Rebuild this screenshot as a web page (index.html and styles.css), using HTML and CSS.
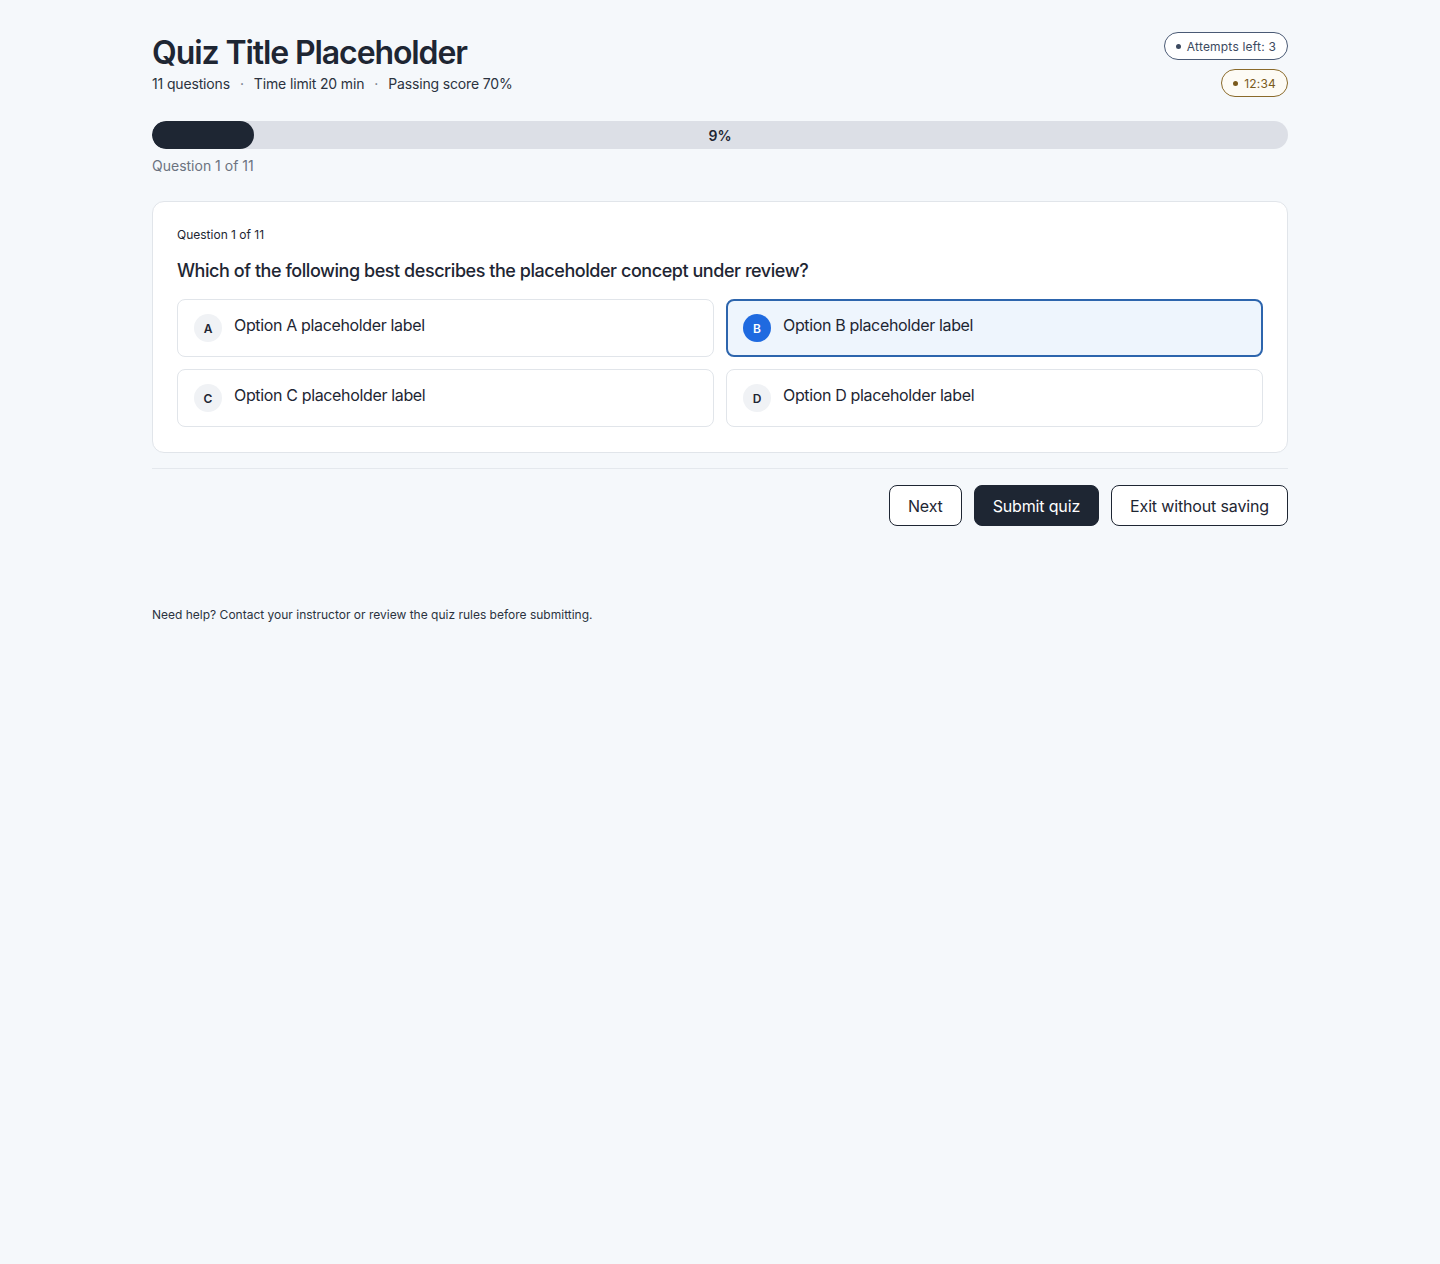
FILE: index.html
```html
<!DOCTYPE html>
<html lang="en">
<head>
    <meta charset="UTF-8">
    <meta name="viewport" content="width=device-width, initial-scale=1.0">
    <title>Quiz Title Placeholder</title>
    <link rel="stylesheet" href="styles.css">
</head>
<body>

    <main class="quiz-page">

        <!-- Header: title, meta and status pills -->
        <header class="quiz-header">
            <div class="quiz-heading">
                <h1 class="quiz-title">Quiz Title Placeholder</h1>
                <p class="quiz-meta">
                    <span>11 questions</span>
                    <span class="sep">·</span>
                    <span>Time limit 20 min</span>
                    <span class="sep">·</span>
                    <span>Passing score 70%</span>
                </p>
            </div>
            <div class="quiz-status">
                <span class="pill pill-attempts"><span class="dot"></span>Attempts left: 3</span>
                <span class="pill pill-timer"><span class="dot"></span>12:34</span>
            </div>
        </header>

        <!-- Progress -->
        <div class="progress">
            <div class="progress-fill" style="width: 9%"></div>
            <span class="progress-label">9%</span>
        </div>
        <p class="progress-caption">Question 1 of 11</p>

        <!-- Question card -->
        <section class="question-card">
            <p class="question-count">Question 1 of 11</p>
            <h2 class="question-text">Which of the following best describes the placeholder concept under review?</h2>

            <div class="options">
                <button class="option">
                    <span class="option-key">A</span>
                    <span class="option-label">Option A placeholder label</span>
                </button>
                <button class="option selected">
                    <span class="option-key">B</span>
                    <span class="option-label">Option B placeholder label</span>
                </button>
                <button class="option">
                    <span class="option-key">C</span>
                    <span class="option-label">Option C placeholder label</span>
                </button>
                <button class="option">
                    <span class="option-key">D</span>
                    <span class="option-label">Option D placeholder label</span>
                </button>
            </div>
        </section>

        <!-- Actions -->
        <div class="actions">
            <button class="btn btn-outline">Next</button>
            <button class="btn btn-primary">Submit quiz</button>
            <button class="btn btn-outline">Exit without saving</button>
        </div>

        <p class="help-text">Need help? Contact your instructor or review the quiz rules before submitting.</p>

    </main>

</body>
</html>
```

FILE: styles.css
```css
/* Reset */
* {
    box-sizing: border-box;
    margin: 0;
    padding: 0;
}

body {
    font-family: Inter, "Noto Sans", sans-serif;
    background-color: #f5f8fb;
    color: #1e2633;
}

/* Page wrapper */
.quiz-page {
    width: 1136px;
    margin: 0 auto;
    padding-top: 32px;
}

/* Header */
.quiz-header {
    display: flex;
    justify-content: space-between;
    align-items: flex-start;
}

.quiz-title {
    font-size: 32px;
    font-weight: 600;
    line-height: 42px;
    letter-spacing: -1.1px;
    color: #1e2633;
}

.quiz-meta {
    display: flex;
    gap: 10px;
    margin-top: 0;
    font-size: 14px;
    line-height: 20px;
    letter-spacing: -0.15px;
    color: #2b3340;
}

.quiz-meta .sep {
    color: #6b7380;
}

.quiz-status {
    display: flex;
    flex-direction: column;
    align-items: flex-end;
    gap: 9px;
}

.pill {
    display: inline-flex;
    align-items: center;
    gap: 6px;
    height: 28px;
    padding: 0 11px;
    border-radius: 14px;
    font-size: 12px;
    letter-spacing: 0.2px;
    background-color: #fff;
}

.pill .dot {
    width: 5px;
    height: 5px;
    border-radius: 50%;
}

.pill-attempts {
    border: 1px solid #4a5a75;
    color: #3c4a60;
}

.pill-attempts .dot {
    background-color: #3c4a60;
}

.pill-timer {
    border: 1px solid #8a6a2a;
    color: #7a5a1c;
    background-color: #fdfbf5;
}

.pill-timer .dot {
    background-color: #7a5a1c;
}

/* Progress bar */
.progress {
    position: relative;
    margin-top: 24px;
    height: 28px;
    border-radius: 14px;
    background-color: #dcdfe6;
    overflow: hidden;
}

.progress-fill {
    height: 100%;
    border-radius: 14px;
    background-color: #1e2633;
}

.progress-label {
    position: absolute;
    inset: 0;
    display: flex;
    align-items: center;
    justify-content: center;
    font-size: 14px;
    font-weight: 600;
    color: #1e2633;
}

.progress-caption {
    margin-top: 8px;
    font-size: 14px;
    line-height: 18px;
    color: #6b7380;
}

/* Question card */
.question-card {
    margin-top: 26px;
    padding: 24px 24px 25px;
    background-color: #fff;
    border: 1px solid #e1e5ea;
    border-radius: 12px;
}

.question-count {
    margin-top: 1px;
    font-size: 12px;
    line-height: 16px;
    color: #1e2633;
}

.question-text {
    margin-top: 17px;
    font-size: 18px;
    font-weight: 500;
    line-height: 22px;
    letter-spacing: -0.45px;
    color: #1e2633;
}

.options {
    display: grid;
    grid-template-columns: 1fr 1fr;
    gap: 12px;
    margin-top: 17px;
}

.option {
    display: flex;
    align-items: center;
    gap: 12px;
    height: 58px;
    padding: 0 16px;
    background-color: #fff;
    border: 1px solid #e1e5ea;
    border-radius: 8px;
    font-family: inherit;
    text-align: left;
    cursor: pointer;
}

.option-key {
    display: flex;
    align-items: center;
    justify-content: center;
    width: 28px;
    height: 28px;
    border-radius: 50%;
    background-color: #f0f2f5;
    font-size: 12px;
    font-weight: 600;
    color: #1e2633;
    flex-shrink: 0;
}

.option-label {
    font-size: 16px;
    letter-spacing: -0.35px;
    color: #1e2633;
    margin-top: -6px;
}

.option.selected {
    border: 2px solid #2d65ad;
    padding: 0 15px;
    background-color: #eef5fd;
}

.option.selected .option-key {
    background-color: #1f6ae0;
    color: #fff;
}

/* Actions */
.actions {
    display: flex;
    justify-content: flex-end;
    gap: 12px;
    margin-top: 15px;
    padding-top: 16px;
    border-top: 1px solid #e4e8ed;
}

.btn {
    height: 41px;
    padding: 0 18px;
    border-radius: 8px;
    font-family: inherit;
    font-size: 16px;
    letter-spacing: -0.15px;
    cursor: pointer;
}

.btn-outline {
    background-color: #fff;
    border: 1px solid #1e2633;
    color: #1e2633;
}

.btn-primary {
    background-color: #1e2633;
    border: 1px solid #1e2633;
    color: #fff;
}

/* Footer help */
.help-text {
    margin-top: 81px;
    font-size: 12px;
    line-height: 16px;
    color: #2b3340;
}
```
